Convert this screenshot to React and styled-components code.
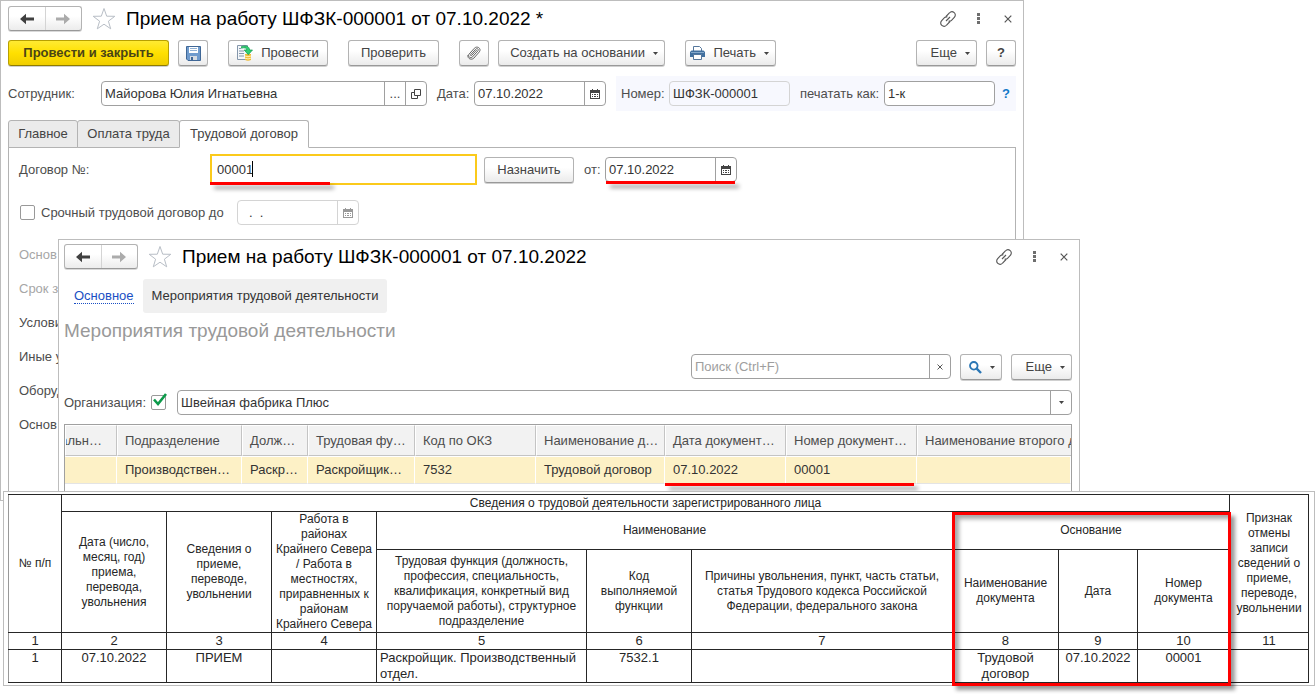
import React from "react";
import styled, { createGlobalStyle, css } from "styled-components";

const GlobalStyle = createGlobalStyle`
  * { box-sizing: border-box; }
  body {
    margin: 0;
    background: #fff;
    color: #4d4d4d;
    font: 13px/16px "Liberation Sans", Arial, sans-serif;
  }
  button, input, select { font: inherit; color: inherit; margin: 0; }
  svg { display: block; flex: none; }
`;

/* Windows on the desktop */
const Desktop = styled.main`
  position: relative;
  min-height: 100vh;
  min-width: 1200px;
  overflow: hidden;
`;
const Window = styled.section`
  position: absolute;
  background: #fff;
  border: 1px solid #bdbdbd;
  display: flex;
  flex-direction: column;
`;
const HiringWindow = styled(Window)`
  top: 0;
  left: 0;
  right: 291px;
  height: 501px;
  padding: 5px 7px 0;
`;
const EventsWindow = styled(Window)`
  top: 239px;
  left: 58px;
  right: 235px;
  height: 256px;
  padding: 4px 7px 0 5px;
`;
const ReportWindow = styled(Window)`
  top: 491px;
  left: 3px;
  right: 0;
  padding: 2px 5px 2px 4px;
`;

/* Title bar */
const TitleBar = styled.header`
  display: flex;
  align-items: center;
  height: 25px;
`;
const NavGroup = styled.div`
  display: flex;
  width: 74px;
  height: 25px;
  border: 1px solid #b3b3b3;
  border-bottom-color: #999;
  border-radius: 3px;
  box-shadow: 0 1px 0 #d9d9d9;
  background: linear-gradient(#fff 40%, #ececec);
`;
const NavButton = styled.button`
  flex: 1;
  display: flex;
  align-items: center;
  justify-content: center;
  padding: 0;
  border: 0;
  background: none;
  color: ${(p) => (p.disabled ? "#ababab" : "#404040")};
  & + & { border-left: 1px solid #d4d4d4; }
`;
const IconButton = styled.button`
  display: flex;
  align-items: center;
  justify-content: center;
  width: 16px;
  height: 24px;
  padding: 0;
  border: 0;
  background: none;
  color: #555;
`;
const StarButton = styled(IconButton)`
  width: 24px;
  margin: 0 10px;
  color: #b8bec6;
`;
const Title = styled.h1`
  flex: 1;
  margin: 0;
  font-size: 19px;
  line-height: 24px;
  font-weight: 400;
  color: #000;
  white-space: nowrap;
`;
const WindowTools = styled.div`
  display: flex;
  gap: 14px;
`;

/* Buttons */
const Toolbar = styled.div`
  display: flex;
  gap: ${(p) => p.$gap || 9}px;
`;
const ToolGroup = styled.div`
  display: flex;
  gap: 9px;
`;
const Spacer = styled.div`
  flex: 1;
`;
const Button = styled.button`
  display: flex;
  align-items: center;
  justify-content: ${(p) => (p.$menu ? "flex-end" : "center")};
  gap: ${(p) => p.$gap || 8}px;
  flex: none;
  width: ${(p) => p.$width}px;
  height: 26px;
  padding: 0 ${(p) => (p.$menu ? 6 : 0)}px 0 0;
  border: 1px solid #b3b3b3;
  border-bottom-color: #999;
  border-radius: 3px;
  box-shadow: 0 1px 0 #d0d0d0;
  background: linear-gradient(#fff 40%, #ebebeb);
  color: #444;
  white-space: nowrap;
  ${(p) =>
    p.$primary &&
    css`
      border-color: #b8a000;
      border-bottom-color: #8f7c00;
      background: linear-gradient(#ffea33, #ffe000 50%, #f0ce00);
      font-weight: 700;
      color: #4a4416;
    `}
`;

/* Fields */
const FieldRow = styled.div`
  display: flex;
  align-items: center;
`;
const Label = styled.label`
  flex: none;
  width: ${(p) => (p.$width ? `${p.$width}px` : "auto")};
  color: #4d4d4d;
  white-space: nowrap;
`;
const Field = styled.div`
  position: relative;
  display: flex;
  flex: ${(p) => (p.$width ? `0 0 ${p.$width}px` : "1")};
  min-width: 0;
  height: ${(p) => (p.$focused ? 31 : 25)}px;
  border: ${(p) => (p.$focused ? "2px solid #fbca1b" : "1px solid #a0a0a0")};
  border-radius: ${(p) => (p.$focused ? 0 : 4)}px;
  border-color: ${(p) => p.$muted && "#d4d4d4"};
  background: ${(p) => (p.$readOnly ? "transparent" : "#fff")};
`;
const Input = styled.input`
  flex: 1;
  width: 0;
  min-width: 0;
  padding: 0 0 0 ${(p) => p.$inset || 3}px;
  border: 0;
  outline: 0;
  background: none;
  color: #333;
  &::placeholder { color: #9e9e9e; opacity: 1; }
`;
const FieldButton = styled.button`
  display: flex;
  align-items: center;
  justify-content: center;
  flex: none;
  width: 21px;
  padding: 0;
  border: 0;
  border-left: 1px solid ${(p) => (p.$muted ? "#d4d4d4" : "#a0a0a0")};
  background: none;
  color: ${(p) => (p.$muted ? "#999" : "#444")};
`;
const RedLine = styled.i`
  position: absolute;
  left: ${(p) => p.$left}px;
  bottom: ${(p) => p.$bottom}px;
  width: ${(p) => p.$width}px;
  height: 3px;
  background: #f00;
  box-shadow: 4px 4px 4px rgba(0, 0, 0, 0.4);
`;
const Caret = styled.i`
  position: absolute;
  left: 40px;
  top: 5px;
  width: 1px;
  height: 16px;
  background: #000;
`;
const NumberPanel = styled.div`
  display: flex;
  align-items: center;
  flex: none;
  width: 400px;
  height: 35px;
  margin-left: 10px;
  padding-left: 5px;
  background: #f7f8fe;
`;
const HelpLink = styled.a`
  margin-left: 7px;
  font-weight: 700;
  color: #1278c8;
  text-decoration: none;
`;
const CheckBox = styled.input`
  appearance: none;
  flex: none;
  width: 15px;
  height: 15px;
  margin: 0;
  border: 1px solid #999;
  border-radius: 2px;
  background: #fff;
`;
const CheckWrap = styled.span`
  position: relative;
  display: flex;
  margin-right: 11px;
  svg { position: absolute; left: 1px; top: -3px; pointer-events: none; }
`;

/* Tabs */
const Tabs = styled.div`
  display: flex;
  position: relative;
  margin-top: 9px;
`;
const Tab = styled.button`
  width: ${(p) => p.$width}px;
  height: 28px;
  margin-right: -1px;
  padding: 0;
  border: 1px solid #b3b3b3;
  border-bottom-color: ${(p) => (p.$active ? "#fff" : "#b3b3b3")};
  border-radius: 3px 3px 0 0;
  background: ${(p) => (p.$active ? "#fff" : "#ebebeb")};
  color: #444;
`;
const TabPane = styled.div`
  flex: 1;
  margin-top: -1px;
  padding: 6px 10px 0;
  border: 1px solid #b3b3b3;
  border-bottom: 0;
`;
const LabelList = styled.ul`
  margin: 13px 0 0;
  padding: 0;
  list-style: none;
  line-height: 34px;
`;
const LabelItem = styled.li`
  width: 39px;
  overflow: hidden;
  white-space: nowrap;
  color: ${(p) => (p.$muted ? "#a6a6a6" : "#4d4d4d")};
`;

/* Events window */
const SectionNav = styled.nav`
  display: flex;
  align-items: center;
  gap: 9px;
  margin: 10px 0 3px;
  padding-left: 10px;
`;
const SectionLink = styled.a`
  color: #1a4fc4;
  text-decoration: none;
  border-bottom: 1px dotted #1a4fc4;
  line-height: 14px;
`;
const SectionCurrent = styled.a`
  padding: 9px;
  border-radius: 3px;
  background: #f0f0f0;
  color: #333;
  text-decoration: none;
`;
const Heading = styled.h2`
  margin: 0 0 8px;
  font-size: 19px;
  line-height: 30px;
  font-weight: 400;
  color: #999;
`;
const OrgRow = styled(FieldRow)`
  margin: 10px 0 9px;
`;
const GridFrame = styled.div`
  position: relative;
  flex: 1;
  border: 1px solid #a0a0a0;
  border-bottom: 0;
`;
const GridTable = styled.table`
  width: 100%;
  table-layout: fixed;
  border-collapse: separate;
  border-spacing: 0;
  th, td {
    padding: 0 0 0 8px;
    text-align: left;
    font-weight: 400;
    white-space: nowrap;
    overflow: hidden;
  }
  th {
    height: 31px;
    padding-left: 7px;
    border: 1px solid #fff;
    border-right-color: #c4c4c4;
    border-bottom-color: #c4c4c4;
    background: #f2f2f2;
    color: #4d4d4d;
  }
  th:last-child { border-right: 0; }
  td {
    height: 28px;
    border-right: 1px solid #fff;
    border-top: 1px solid #fff;
    border-bottom: 1px solid #e4e4e4;
    background: #fdf1c6;
    color: #333;
  }
`;
const CutLeft = styled.div`
  display: flex;
  justify-content: flex-end;
  overflow: hidden;
  margin-left: -7px;
  padding-right: 14px;
`;

/* Printed report */
const ReportTable = styled.table`
  width: 100%;
  table-layout: fixed;
  border-collapse: collapse;
  color: #262626;
  th, td {
    padding: 0 2px;
    border: 1px solid #262626;
    text-align: center;
    font-weight: 400;
    font-size: 12px;
    line-height: 15px;
  }
  td { font-size: 13px; line-height: 16px; vertical-align: top; padding: 0 3px; }
  th:first-child, td:first-child { border-left-color: #999; }
`;
const ReportRow = styled.tr`
  height: ${(p) => p.$height}px;
`;
const LeftCell = styled.td`
  && { text-align: left; }
`;
const RedFrame = styled.div`
  position: absolute;
  right: 83px;
  top: 20px;
  bottom: -1px;
  width: 279px;
  border: 3px solid #f00;
  box-shadow: 4px 4px 4px rgba(0, 0, 0, 0.4), inset 4px 4px 4px rgba(0, 0, 0, 0.35);
  pointer-events: none;
`;

/* Icons */
const Arrow = ({ flip }) => (
  <svg width="14" height="12" viewBox="0 0 14 12" transform={flip ? "scale(-1 1)" : undefined}>
    <path d="M0 6 6 .8V4.6H14V7.4H6V11.2Z" fill="currentColor" />
  </svg>
);
const Star = () => (
  <svg width="24" height="24" viewBox="0 0 24 24" fill="none" stroke="currentColor">
    <path d="M12 1.5 14.7 9.2 22.8 9.3 16.4 14.2 18.7 21.8 12 17.2 5.3 21.8 7.6 14.2 1.2 9.3 9.3 9.2Z" />
  </svg>
);
const LinkIcon = () => (
  <svg width="16" height="16" viewBox="0 0 16 16" fill="none" stroke="currentColor" strokeWidth="1.1">
    <path d="M6 5.500 9.400 2C10.800 .4 12.800 .4 14.200 1.600S15.700 4.900 14.300 6.400L11.500 9.300C10.600 10.200 9.500 10.300 8.600 9.900" />
    <path d="M10 10.500 6.600 14C5.200 15.600 3.200 15.600 1.800 14.400S.300 11.100 1.700 9.600L4.500 6.700C5.400 5.800 6.500 5.700 7.400 6.100" />
    <path d="M6 10 10 6" />
  </svg>
);
const Dots = () => (
  <svg width="3" height="11" viewBox="0 0 3 11" fill="currentColor">
    <path d="M0 0H3V3H0ZM0 4H3V7H0ZM0 8H3V11H0Z" opacity=".85" />
  </svg>
);
const Cross = ({ size = 8 }) => (
  <svg width={size} height={size} viewBox="0 0 8 8" fill="none" stroke="currentColor" strokeWidth="1.200">
    <path d="M.700 .700 7.300 7.300M7.300 .700 .700 7.300" />
  </svg>
);
const Triangle = () => (
  <svg width="5" height="3" viewBox="0 0 5 3">
    <path d="M0 0H5L2.500 3Z" fill="#444" />
  </svg>
);
const Disk = () => (
  <svg width="15" height="15" viewBox="0 0 15 15">
    <path d="M.5 .5H14.500V14.500H2L.5 13Z" fill="#6f9bcd" stroke="#3f6796" />
    <path d="M3 1H12V7H3Z" fill="#fff" />
    <path d="M4 2.500H11M4 4.500H11" stroke="#8fb0d4" />
    <path d="M4 10H11V14H4Z" fill="#d5dbe2" />
    <path d="M5 11H7V14H5Z" fill="#3f6796" />
  </svg>
);
const PostIcon = () => (
  <svg width="16" height="16" viewBox="0 0 16 16">
    <path d="M.5 .5H10.500V14.500H.5Z" fill="#f4f7fa" stroke="#8496ab" />
    <path d="M2 3.500H4M2 6H7M2 8.500H7M2 11H7" stroke="#8496ab" />
    <path d="M8 9H14V15Q11 16.500 8 15Z" fill="#edbb38" />
    <path d="M8 11Q11 12.500 14 11M8 13.200Q11 14.700 14 13.200" fill="none" stroke="#fff1b4" />
    <path d="M4.500 1.500C9 .3 12.300 1.200 12.600 5H15.500L11.300 9.700 7.200 5H9.800C9.700 3 7.800 2.200 4.500 3.200Z" fill="#2fcf73" stroke="#139a4c" strokeWidth=".700" />
  </svg>
);
const Clip = () => (
  <svg width="14" height="14" viewBox="0 0 14 14" fill="none" stroke="#666" strokeLinecap="round">
    <path d="M9.500 4.200 4.800 9.300C4 10.100 3 9.300 3.800 8.400L8.700 3.200C10.200 1.700 12.200 3.300 10.800 5L5.600 10.800C3.600 12.900 .4 10.700 2 8.200L7.300 2.300C9.900-.6 14.800 2.300 12.400 5.800L6.800 12.200C4.500 14.400 .4 12.800 .8 9.500" />
  </svg>
);
const Printer = () => (
  <svg width="15" height="14" viewBox="0 0 15 14">
    <path d="M3.500 5V.5H9.500L11.500 2.500V5" fill="#fff" stroke="#55779c" />
    <path d="M1.500 4.500H13.500L15 6V11H0V6Z" fill="#41709f" />
    <path d="M1 6.500H14" stroke="#86a9ca" />
    <path d="M3.500 8.500H11.500V13.500H3.500Z" fill="#fff" stroke="#55779c" />
  </svg>
);
const Calendar = () => (
  <svg width="10" height="10" viewBox="0 0 10 10" fill="currentColor">
    <path d="M0 1H2V0H3V1H7V0H8V1H10V10H0ZM1 4V9H9V4Z" fillRule="evenodd" />
    <path d="M2 5H3V6H2ZM4 5H6V6H4ZM7 5H8V6H7ZM2 7H3V8H2ZM4 7H6V8H4ZM7 7H8V8H7Z" />
  </svg>
);
const OpenIcon = () => (
  <svg width="10" height="10" viewBox="0 0 10 10" fill="none" stroke="currentColor">
    <path d="M3.500 .5H9.500V6.500H3.500Z" />
    <path d="M3 3.500H.5V9.500H6.500V7" />
  </svg>
);
const Magnifier = () => (
  <svg width="13" height="13" viewBox="0 0 13 13" fill="none" stroke="#2a76b4">
    <circle cx="4.800" cy="4.800" r="3.800" strokeWidth="1.800" />
    <path d="M7.700 7.700 12 12" strokeWidth="2.400" />
  </svg>
);
const Check = () => (
  <svg width="16" height="16" viewBox="0 0 16 16" fill="none" stroke="#0c9a4a" strokeWidth="2.600">
    <path d="M2 7.500 6 12 14 2" />
  </svg>
);

const WindowHeader = ({ children }) => (
  <TitleBar>
    <NavGroup>
      <NavButton aria-label="Назад"><Arrow /></NavButton>
      <NavButton aria-label="Вперед" disabled><Arrow flip /></NavButton>
    </NavGroup>
    <StarButton aria-label="Избранное"><Star /></StarButton>
    <Title>{children}</Title>
    <WindowTools>
      <IconButton aria-label="Ссылка"><LinkIcon /></IconButton>
      <IconButton aria-label="Меню"><Dots /></IconButton>
      <IconButton aria-label="Закрыть"><Cross /></IconButton>
    </WindowTools>
  </TitleBar>
);

const DateField = ({ id, width, value, muted, inset, label, children }) => (
  <Field $width={width} $muted={muted}>
    <Input id={id} aria-label={label} defaultValue={value} $inset={inset} disabled={muted} />
    <FieldButton $muted={muted} aria-label="Календарь"><Calendar /></FieldButton>
    {children}
  </Field>
);

const MainToolbar = styled(Toolbar)`
  margin: 9px 0 10px;
`;
const HeaderFields = styled(FieldRow)`
  height: 35px;
`;
const NextLabel = styled(Label)`
  margin-left: 10px;
`;
const ContractRow = styled(FieldRow)`
  margin-bottom: 15px;
`;
const TermRow = styled(FieldRow)`
  padding-left: 1px;
`;
const AssignButton = styled(Button)`
  margin-left: 7px;
`;
const TermLabel = styled(Label)`
  margin-left: 6px;
`;

const HiringForm = () => (
  <HiringWindow>
    <WindowHeader>Прием на работу ШФЗК-000001 от 07.10.2022 *</WindowHeader>
    <MainToolbar $gap={20}>
      <ToolGroup>
        <Button $primary $width={161}>Провести и закрыть</Button>
        <Button $width={30} aria-label="Записать"><Disk /></Button>
      </ToolGroup>
      <Button $width={100}><PostIcon />Провести</Button>
      <Button $width={91}>Проверить</Button>
      <ToolGroup>
        <Button $width={30} aria-label="Файлы"><Clip /></Button>
        <Button $width={167} $menu>Создать на основании<Triangle /></Button>
      </ToolGroup>
      <Button $width={91} $menu><Printer />Печать<Triangle /></Button>
      <Spacer />
      <ToolGroup>
        <Button $width={61} $menu>Еще<Triangle /></Button>
        <Button $width={30}><b>?</b></Button>
      </ToolGroup>
    </MainToolbar>
    <HeaderFields>
      <Label htmlFor="employee" $width={93}>Сотрудник:</Label>
      <Field>
        <Input id="employee" defaultValue="Майорова Юлия Игнатьевна" />
        <FieldButton aria-label="Выбрать">...</FieldButton>
        <FieldButton aria-label="Открыть"><OpenIcon /></FieldButton>
      </Field>
      <NextLabel htmlFor="date" $width={37}>Дата:</NextLabel>
      <DateField id="date" width={132} value="07.10.2022" />
      <NumberPanel>
        <Label htmlFor="number" $width={48}>Номер:</Label>
        <Field $width={121} $muted $readOnly>
          <Input id="number" readOnly defaultValue="ШФЗК-000001" />
        </Field>
        <NextLabel htmlFor="print-as" $width={84}>печатать как:</NextLabel>
        <Field $width={111}>
          <Input id="print-as" defaultValue="1-к" />
        </Field>
        <HelpLink href="#help">?</HelpLink>
      </NumberPanel>
    </HeaderFields>
    <Tabs role="tablist">
      <Tab role="tab" $width={70}>Главное</Tab>
      <Tab role="tab" $width={103}>Оплата труда</Tab>
      <Tab role="tab" $width={130} $active aria-selected="true">Трудовой договор</Tab>
    </Tabs>
    <TabPane>
      <ContractRow>
        <Label htmlFor="contract" $width={191}>Договор №:</Label>
        <Field $width={267} $focused>
          <Input id="contract" defaultValue="00001" $inset={5} />
          <Caret />
          <RedLine $left={-2} $bottom={-2} $width={120} />
        </Field>
        <AssignButton $width={90}>Назначить</AssignButton>
        <NextLabel htmlFor="contract-date" $width={21}>от:</NextLabel>
        <DateField id="contract-date" width={132} value="07.10.2022">
          <RedLine $left={0} $bottom={-3} $width={129} />
        </DateField>
      </ContractRow>
      <TermRow>
        <CheckBox type="checkbox" id="term" />
        <TermLabel htmlFor="term" $width={196}>Срочный трудовой договор до</TermLabel>
        <DateField width={122} value=".  ." label="Дата окончания" muted inset={11} />
      </TermRow>
      <LabelList>
        <LabelItem $muted>Основ</LabelItem>
        <LabelItem $muted>Срок з</LabelItem>
        <LabelItem>Услови</LabelItem>
        <LabelItem>Иные у</LabelItem>
        <LabelItem>Оборуд</LabelItem>
        <LabelItem>Основ</LabelItem>
      </LabelList>
    </TabPane>
  </HiringWindow>
);

const gridColumns = [
  { title: <CutLeft>альн…</CutLeft>, value: "", width: 52 },
  { title: "Подразделение", value: "Производствен…", width: 125 },
  { title: "Долж…", value: "Раскр…", width: 66 },
  { title: "Трудовая фу…", value: "Раскройщик…", width: 107 },
  { title: "Код по ОКЗ", value: "7532", width: 121 },
  { title: "Наименование д…", value: "Трудовой договор", width: 129 },
  { title: "Дата документ…", value: "07.10.2022", width: 121 },
  { title: "Номер документ…", value: "00001", width: 131 },
  { title: "Наименование второго д", value: "" },
];

const LaborEvents = () => (
  <EventsWindow>
    <WindowHeader>Прием на работу ШФЗК-000001 от 07.10.2022</WindowHeader>
    <SectionNav>
      <SectionLink href="#main">Основное</SectionLink>
      <SectionCurrent href="#events">Мероприятия трудовой деятельности</SectionCurrent>
    </SectionNav>
    <Heading>Мероприятия трудовой деятельности</Heading>
    <Toolbar>
      <Spacer />
      <Field $width={260}>
        <Input aria-label="Поиск" placeholder="Поиск (Ctrl+F)" />
        <FieldButton aria-label="Очистить"><Cross size={6} /></FieldButton>
      </Field>
      <Button $width={42} $menu aria-label="Найти"><Magnifier /><Triangle /></Button>
      <Button $width={61} $menu>Еще<Triangle /></Button>
    </Toolbar>
    <OrgRow>
      <Label htmlFor="org-on" $width={87}>Организация:</Label>
      <CheckWrap>
        <CheckBox type="checkbox" id="org-on" defaultChecked />
        <Check />
      </CheckWrap>
      <Field>
        <Input aria-label="Организация" defaultValue="Швейная фабрика Плюс" />
        <FieldButton aria-label="Список"><Triangle /></FieldButton>
      </Field>
    </OrgRow>
    <GridFrame>
      <GridTable>
        <colgroup>
          {gridColumns.map((c, i) => <col key={i} width={c.width} />)}
        </colgroup>
        <thead>
          <tr>{gridColumns.map((c, i) => <th key={i}>{c.title}</th>)}</tr>
        </thead>
        <tbody>
          <tr>{gridColumns.map((c, i) => <td key={i}>{c.value}</td>)}</tr>
        </tbody>
      </GridTable>
      <RedLine $left={600} $bottom={8} $width={249} />
    </GridFrame>
  </EventsWindow>
);

const reportWidths = [53, 105, 105, 105, 210, 105, undefined, 106, 79, 92, 79];

const Report = () => (
  <ReportWindow>
    <ReportTable>
      <colgroup>
        {reportWidths.map((w, i) => <col key={i} width={w} />)}
      </colgroup>
      <thead>
        <ReportRow $height={17}>
          <th rowSpan={3}>№ п/п</th>
          <th colSpan={9}>Сведения о трудовой деятельности зарегистрированного лица</th>
          <th rowSpan={3}>Признак отмены записи сведений о приеме, переводе, увольнении</th>
        </ReportRow>
        <ReportRow $height={38}>
          <th rowSpan={2}>Дата (число, месяц, год) приема, перевода, увольнения</th>
          <th rowSpan={2}>Сведения о приеме, переводе, увольнении</th>
          <th rowSpan={2}>Работа в<br />районах Крайнего Севера / Работа в местностях, приравненных к районам Крайнего Севера</th>
          <th colSpan={3}>Наименование</th>
          <th colSpan={3}>Основание</th>
        </ReportRow>
        <ReportRow $height={83}>
          <th>Трудовая функция (должность, профессия, специальность, квалификация, конкретный вид поручаемой работы), структурное подразделение</th>
          <th>Код выполняемой функции</th>
          <th>Причины увольнения, пункт, часть статьи, статья Трудового кодекса Российской Федерации, федерального закона</th>
          <th>Наименование документа</th>
          <th>Дата</th>
          <th>Номер документа</th>
        </ReportRow>
      </thead>
      <tbody>
        <ReportRow $height={17}>
          {reportWidths.map((_, i) => <td key={i}>{i + 1}</td>)}
        </ReportRow>
        <ReportRow $height={33}>
          <td>1</td>
          <td>07.10.2022</td>
          <td>ПРИЕМ</td>
          <td />
          <LeftCell>Раскройщик. Производственный отдел.</LeftCell>
          <td>7532.1</td>
          <td />
          <td>Трудовой договор</td>
          <td>07.10.2022</td>
          <td>00001</td>
          <td />
        </ReportRow>
      </tbody>
    </ReportTable>
    <RedFrame />
  </ReportWindow>
);

export default function App() {
  return (
    <>
      <GlobalStyle />
      <Desktop>
        <HiringForm />
        <LaborEvents />
        <Report />
      </Desktop>
    </>
  );
}
